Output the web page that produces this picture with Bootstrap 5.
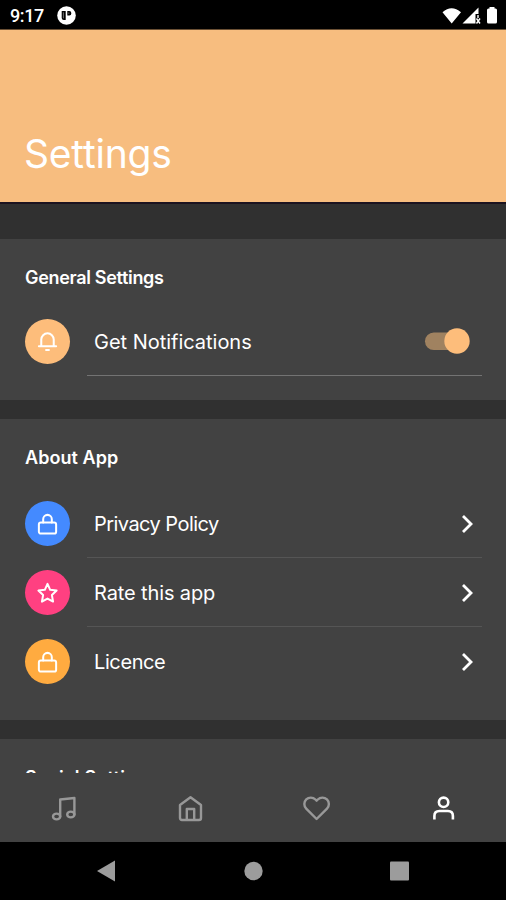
<!DOCTYPE html>
<html lang="en">
<head>
<meta charset="utf-8">
<meta name="viewport" content="width=device-width, initial-scale=1">
<title>Settings</title>
<link href="https://cdn.jsdelivr.net/npm/bootstrap@5.3.0/dist/css/bootstrap.min.css" rel="stylesheet">
<style>
body{background:#303030;font-family:Inter,"Noto Sans",sans-serif;color:#fff}
.screen{height:900px}
.status{height:30px;background:#000;border-bottom:1px solid #6b5034;padding:2px 8px 0 10px;font:500 18px/1 Roboto,sans-serif}
.clock{width:47px;letter-spacing:-.4px}
.hero{height:174px;background:#f7bd7f;border-bottom:2px solid #1c1320;padding:0 25px 23px 24px}
.hero h1{font-size:39px;font-weight:400;line-height:50px;letter-spacing:-.2px}
.content-area{height:569px;padding-top:35px;gap:19px}
.group{background:#424242;padding:0 24px 24px 25px}
.group h2{font-size:18px;font-weight:600;line-height:24px;height:68px;padding-top:27px;letter-spacing:-.32px}
.group.about h2{height:70px;letter-spacing:.05px}
.group.social h2{padding-top:27px;letter-spacing:.3px}
.disc{width:45px;height:45px}
.disc svg{width:23px;height:23px;margin-right:1px;stroke-width:2.1}
.item{height:69px;gap:17px}
.item-body{border-bottom:1px solid #555;padding:2px 7px 0;font-size:20px;letter-spacing:-.02px}
.item-body.strong-line{border-color:#737373}
.item-body.last{border-color:transparent}
.policy{letter-spacing:-.55px}
.rate{letter-spacing:-.12px}
.licence{letter-spacing:-.4px}
.orange{background:#fdbd7b}.blue{background:#448aff}.pink{background:#ff4081}.amber{background:#ffab40}
.toggle{width:47px;height:26px;margin:-2px 5px 0 0}
.tabs{height:69px;background:#424242;color:#989898}
.tabs svg{width:30px;height:30px;stroke-width:2.4}
.tabs .text-white svg{stroke-width:2.6;stroke-linecap:butt}
.system{height:58px;background:#000}
.line-icon{fill:none;stroke:currentColor;stroke-width:2;stroke-linecap:round;stroke-linejoin:round}
.chevron{width:16px;height:22px}
</style>
<script src="https://cdn.jsdelivr.net/npm/bootstrap@5.3.0/dist/js/bootstrap.bundle.min.js"></script>
</head>
<body>
<div class="screen d-flex flex-column overflow-hidden">
  <div class="status d-flex align-items-center flex-shrink-0">
    <span class="clock">9:17</span>
    <svg width="19" height="19" viewBox="0 0 19 19"><circle cx="9.5" cy="9.5" r="9.3" fill="#fff"/><path d="M4.7 5h4v9h-1.8q-2.2 0-2.2-2zM10.3 5h2q2 0 2 2v.5q0 2-2 2h-2z" fill="#000"/><path d="M6.4 6.3v6M11.8 6.5v1.3" stroke="#888" stroke-width=".8"/></svg>
    <svg class="ms-auto" width="56" height="20" viewBox="0 0 56 20" fill="#fff"><path d="M.5 6.200Q9.500-1.500 19 6.200L9.700 17.500zM36.500 1.500V8h-3v9.500H20.500z"/><path d="M36 9v3M34.500 12.500l3.500 5m0-5l-3.500 5" stroke="#fff" stroke-width="1.400"/><path d="M45 4q0-1.500 1.500-1.500h1V1h5v1.500h1q1.500 0 1.500 1.500v12q0 1.500-1.500 1.500h-7q-1.500 0-1.500-1.500z"/></svg>
  </div>
  <header class="hero d-flex align-items-end flex-shrink-0"><h1 class="m-0">Settings</h1></header>
  <main class="content-area d-flex flex-column flex-shrink-0 overflow-hidden">
    <section class="group flex-shrink-0">
      <h2 class="m-0">General Settings</h2>
      <div class="item d-flex align-items-center">
        <div class="disc orange rounded-circle d-flex align-items-center justify-content-center flex-shrink-0"><svg class="line-icon" viewBox="0 0 24 24"><path d="M3 17h18M5.500 16.500V10a6.500 6.500 0 0 1 13 0v6.500M10.500 20.800h3"/></svg></div>
        <div class="item-body strong-line h-100 flex-grow-1 d-flex align-items-center justify-content-between"><span>Get Notifications</span><svg class="toggle" viewBox="0 0 47 26"><rect x="2" y="4.500" width="38" height="17.500" rx="8.750" fill="#a08260"/><circle cx="34" cy="13" r="12.700" fill="#fdbd7b"/></svg></div>
      </div>
    </section>
    <section class="group about flex-shrink-0">
      <h2 class="m-0">About App</h2>
      <div class="item d-flex align-items-center">
        <div class="disc blue rounded-circle d-flex align-items-center justify-content-center flex-shrink-0"><svg class="line-icon" viewBox="0 0 24 24"><rect x="3" y="11" width="18" height="11.500" rx="2"/><path d="M7.500 11V7.500a4.500 4.500 0 0 1 9 0V11"/></svg></div>
        <div class="item-body h-100 flex-grow-1 d-flex align-items-center justify-content-between"><span class="policy">Privacy Policy</span><svg class="chevron" viewBox="0 0 16 22" fill="none" stroke="#fff" stroke-width="2.800"><path d="M4 3l8 8-8 8"/></svg></div>
      </div>
      <div class="item d-flex align-items-center">
        <div class="disc pink rounded-circle d-flex align-items-center justify-content-center flex-shrink-0"><svg class="line-icon" viewBox="0 0 24 24"><path d="M12 3l2.800 6.200 6.700.8-4.900 4.700 1.200 6.800-5.800-3.200L6.200 21.500l1.200-6.800L2.500 10l6.700-.8z"/></svg></div>
        <div class="item-body h-100 flex-grow-1 d-flex align-items-center justify-content-between"><span class="rate">Rate this app</span><svg class="chevron" viewBox="0 0 16 22" fill="none" stroke="#fff" stroke-width="2.800"><path d="M4 3l8 8-8 8"/></svg></div>
      </div>
      <div class="item d-flex align-items-center">
        <div class="disc amber rounded-circle d-flex align-items-center justify-content-center flex-shrink-0"><svg class="line-icon" viewBox="0 0 24 24"><rect x="3" y="11" width="18" height="11.500" rx="2"/><path d="M7.500 11V7.500a4.500 4.500 0 0 1 9 0V11"/></svg></div>
        <div class="item-body last h-100 flex-grow-1 d-flex align-items-center justify-content-between"><span class="licence">Licence</span><svg class="chevron" viewBox="0 0 16 22" fill="none" stroke="#fff" stroke-width="2.800"><path d="M4 3l8 8-8 8"/></svg></div>
      </div>
    </section>
    <section class="group social flex-shrink-0"><h2 class="m-0">Social Settings</h2></section>
  </main>
  <nav class="tabs row g-0 align-items-center text-center flex-shrink-0">
    <div class="col"><svg class="line-icon" viewBox="0 0 30 30"><path d="M12.200 23.500V6.500l14.200-1.500V21.500"/><ellipse cx="8.600" cy="23.500" rx="3.600" ry="2.900"/><ellipse cx="22.800" cy="21.500" rx="3.600" ry="2.900"/></svg></div>
    <div class="col"><svg class="line-icon" viewBox="0 0 30 30"><path d="M5 12L15.500 4.200 26 12v13q0 2-2 2H7q-2 0-2-2zM11.800 27V16h7.400v11"/></svg></div>
    <div class="col"><svg class="line-icon" viewBox="0 0 30 30"><path d="M15.600 26L5.200 15.600a6.300 6.300 0 0 1 9.200-9.100l1.200 1.200 1.200-1.200a6.300 6.300 0 0 1 9.200 9.100z"/></svg></div>
    <div class="col text-white"><svg class="line-icon" viewBox="0 0 30 30"><circle cx="15.600" cy="9.300" r="4.700"/><path d="M6.400 26.500v-3.500q0-5 5-5h8.500q5 0 5 5v3.500"/></svg></div>
  </nav>
  <div class="system flex-shrink-0">
    <svg class="d-block w-100 h-100" viewBox="0 0 506 58" fill="#9c9c9c"><path d="M97 29l18-10.500v21z"/><circle cx="253.500" cy="29" r="9.200"/><rect x="390" y="19.500" width="19" height="19" rx="1"/></svg>
  </div>
</div>
</body>
</html>
